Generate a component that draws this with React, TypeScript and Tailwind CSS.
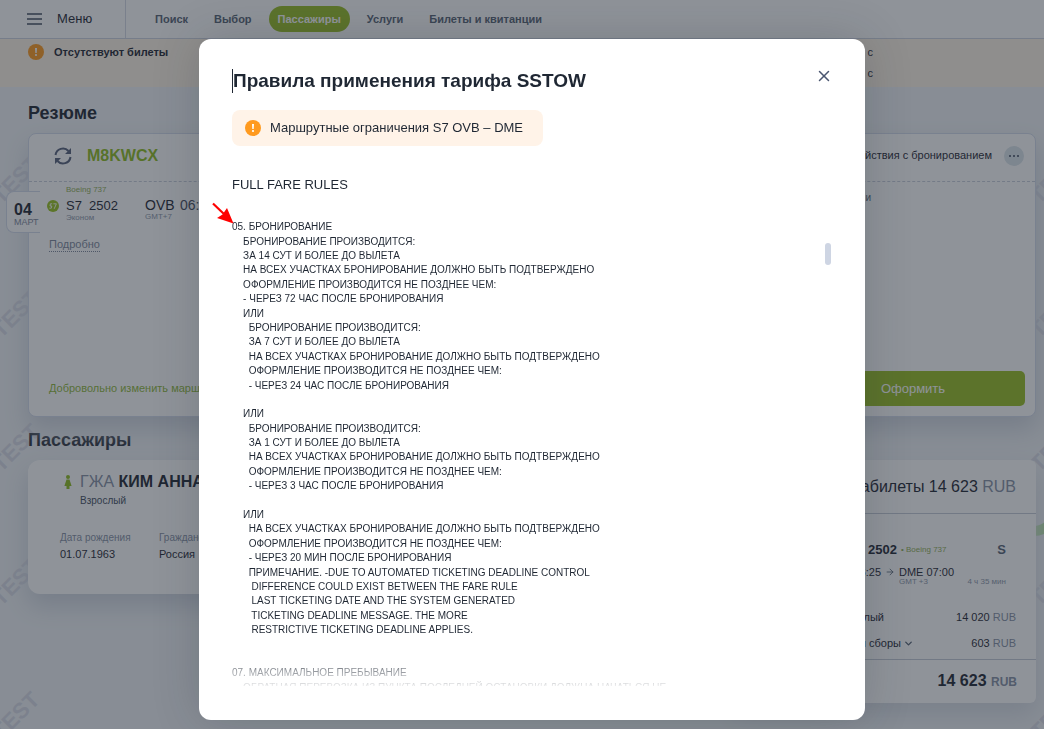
import { X, ChevronDown, ArrowRight } from 'lucide-react'
import clsx from 'clsx'

const navItems = [
  { label: 'Поиск',              active: false },
  { label: 'Выбор',              active: false },
  { label: 'Пассажиры',          active: true  },
  { label: 'Услуги',             active: false },
  { label: 'Билеты и квитанции', active: false },
]

// Leading spaces are part of the fare text, as it comes from the airline
const fareLines = [
  '05. БРОНИРОВАНИЕ',
  '    БРОНИРОВАНИЕ ПРОИЗВОДИТСЯ:',
  '    ЗА 14 СУТ И БОЛЕЕ ДО ВЫЛЕТА',
  '    НА ВСЕХ УЧАСТКАХ БРОНИРОВАНИЕ ДОЛЖНО БЫТЬ ПОДТВЕРЖДЕНО',
  '    ОФОРМЛЕНИЕ ПРОИЗВОДИТСЯ НЕ ПОЗДНЕЕ ЧЕМ:',
  '    - ЧЕРЕЗ 72 ЧАС ПОСЛЕ БРОНИРОВАНИЯ',
  '    ИЛИ',
  '      БРОНИРОВАНИЕ ПРОИЗВОДИТСЯ:',
  '      ЗА 7 СУТ И БОЛЕЕ ДО ВЫЛЕТА',
  '      НА ВСЕХ УЧАСТКАХ БРОНИРОВАНИЕ ДОЛЖНО БЫТЬ ПОДТВЕРЖДЕНО',
  '      ОФОРМЛЕНИЕ ПРОИЗВОДИТСЯ НЕ ПОЗДНЕЕ ЧЕМ:',
  '      - ЧЕРЕЗ 24 ЧАС ПОСЛЕ БРОНИРОВАНИЯ',
  '',
  '    ИЛИ',
  '      БРОНИРОВАНИЕ ПРОИЗВОДИТСЯ:',
  '      ЗА 1 СУТ И БОЛЕЕ ДО ВЫЛЕТА',
  '      НА ВСЕХ УЧАСТКАХ БРОНИРОВАНИЕ ДОЛЖНО БЫТЬ ПОДТВЕРЖДЕНО',
  '      ОФОРМЛЕНИЕ ПРОИЗВОДИТСЯ НЕ ПОЗДНЕЕ ЧЕМ:',
  '      - ЧЕРЕЗ 3 ЧАС ПОСЛЕ БРОНИРОВАНИЯ',
  '',
  '    ИЛИ',
  '      НА ВСЕХ УЧАСТКАХ БРОНИРОВАНИЕ ДОЛЖНО БЫТЬ ПОДТВЕРЖДЕНО',
  '      ОФОРМЛЕНИЕ ПРОИЗВОДИТСЯ НЕ ПОЗДНЕЕ ЧЕМ:',
  '      - ЧЕРЕЗ 20 МИН ПОСЛЕ БРОНИРОВАНИЯ',
  '      ПРИМЕЧАНИЕ. -DUE TO AUTOMATED TICKETING DEADLINE CONTROL',
  '       DIFFERENCE COULD EXIST BETWEEN THE FARE RULE',
  '       LAST TICKETING DATE AND THE SYSTEM GENERATED',
  '       TICKETING DEADLINE MESSAGE. THE MORE',
  '       RESTRICTIVE TICKETING DEADLINE APPLIES.',
  '',
  '',
  '07. МАКСИМАЛЬНОЕ ПРЕБЫВАНИЕ',
  '    ОБРАТНАЯ ПЕРЕВОЗКА ИЗ ПУНКТА ПОСЛЕДНЕЙ ОСТАНОВКИ ДОЛЖНА НАЧАТЬСЯ НЕ',
]

function WarningIcon() {
  return (
    <svg viewBox="0 0 16 16" className="size-4 shrink-0" aria-hidden="true">
      <circle cx="8" cy="8" r="8" fill="#ff9a1f" />
      <path d="M7 4h2l-.3 5H7.3z" fill="#fff" />
      <circle cx="8" cy="11" r="1.1" fill="#fff" />
    </svg>
  )
}

function SyncIcon() {
  return (
    <svg viewBox="0 0 18 18" className="size-[18px]" aria-hidden="true">
      <path d="M1.5 8A7.5 7.5 0 0 1 14.5 4M16.5 10A7.5 7.5 0 0 1 3.5 14" stroke="#56607a" strokeWidth="2" fill="none" />
      <path d="M17 1v6h-6zM1 17v-6h6z" fill="#56607a" />
    </svg>
  )
}

function Watermarks({ className }: { className: string }) {
  return (
    <div aria-hidden="true" className={clsx('absolute top-[163px] flex flex-col gap-[100px]', className)}>
      {[0, 1, 2, 3, 4].map(i => (
        <span key={i} className="-rotate-45 text-[22px] leading-[34px] font-bold text-[#d9dbe6]">TEST</span>
      ))}
    </div>
  )
}

function Header() {
  return (
    <header className="flex h-[39px] items-center border-b border-[#cdd3e0] bg-white">
      <button className="flex h-full w-[126px] items-center gap-[15px] border-r border-[#d5d9e4] pl-[27px] text-[13px]">
        <svg viewBox="0 0 15 12" className="h-3 w-[15px]" stroke="#434e60" strokeWidth="1.4" aria-hidden="true">
          <path d="M0 1h15M0 6h15M0 11h15" />
        </svg>
        Меню
      </button>
      <nav className="ml-5 flex items-center gap-2 text-[11px] font-bold">
        {navItems.map(item => (
          <a
            key={item.label}
            href="#"
            className={clsx(
              'flex h-[26px] items-center rounded-full px-[9px]',
              item.active ? 'bg-[#99bf23] text-white' : 'text-[#566374]'
            )}
          >
            {item.label}
          </a>
        ))}
      </nav>
    </header>
  )
}

function Notice() {
  return (
    <div className="flex h-12 justify-between bg-[#fff5e6] pt-[5px] pr-[171px] pl-7 text-[11px]">
      <div className="flex h-4 items-center gap-[10px] font-bold">
        <WarningIcon />
        Отсутствуют билеты
      </div>
      <div className="-mt-[2px] leading-[21px]">
        <p>с</p>
        <p>с</p>
      </div>
    </div>
  )
}

function Booking() {
  return (
    <section className="relative h-[284px] rounded-lg border border-[#d3daea] bg-white shadow-[0_12px_24px_#cdd3dd]">
      <div className="flex h-12 items-center border-b border-dashed border-[#c8cedb] pr-[11px] pb-1 pl-[25px]">
        <SyncIcon />
        <span className="ml-[15px] text-base font-bold text-[#8fbc1f]">M8KWCX</span>
        <span className="mr-3 ml-auto text-[11px]">Действия с бронированием</span>
        <button aria-label="Ещё" className="flex size-5 items-center justify-center gap-[2px] rounded-full bg-[#dbe4ea]">
          <i className="size-[2px] rounded-full bg-[#3d475c]" />
          <i className="size-[2px] rounded-full bg-[#3d475c]" />
          <i className="size-[2px] rounded-full bg-[#3d475c]" />
        </button>
      </div>

      {/* Date tab sticks out of the card */}
      <div className="absolute top-[57px] -left-[23px] h-[42px] w-[34px] rounded-l-lg border border-r-0 border-[#d3daea] bg-white pt-[10px] pl-[7px]">
        <div className="text-base leading-4 font-bold">04</div>
        <div className="text-[9px] leading-2 text-[#7d879b]">МАРТ</div>
      </div>

      <div className="flex items-start pt-1 pl-[18px]">
        <svg viewBox="0 0 12 12" className="mt-[14px] size-3" aria-hidden="true">
          <circle cx="6" cy="6" r="6" fill="#99c31f" />
          <path d="M5.2 3.8H3.4L3 6h1.8l-.5 2.2H2.4M6.4 3.8h3L7.2 8.8" stroke="#fff" strokeWidth="0.9" fill="none" />
        </svg>
        <div className="ml-[7px] w-[79px] text-[8px] leading-[8px] text-[#8d97aa]">
          <div className="text-[#90ae55]">Boeing 737</div>
          <div className="text-[13px] leading-6 whitespace-pre text-[#1f2733]">S7  2502</div>
          <div className="-mt-1">Эконом</div>
        </div>
        <div className="w-[35px] pt-[7px] text-[8px] leading-[8px] text-[#8d97aa]">
          <div className="text-[14px] leading-6 text-[#1f2733]">OVB</div>
          <div className="-mt-1">GMT+7</div>
        </div>
        <div className="pt-[7px] text-[14px] leading-6 text-[#434b5b]">06:25</div>
        <div className="mt-1 mr-[164px] ml-auto text-[10px] text-[#566374]">и</div>
      </div>
      <a href="#" className="mt-4 ml-5 inline-block border-b border-dotted border-[#7d879b] text-[11px] leading-[13px] text-[#7d879b]">Подробно</a>

      <div className="absolute right-[10px] bottom-[10px] left-5 flex items-center justify-between">
        <a href="#" className="text-[11px] text-[#8fb83a]">Добровольно изменить маршрут</a>
        <button className="h-[35px] w-[224px] rounded-[5px] bg-[#99bf23] text-[13px] text-white">Оформить</button>
      </div>
    </section>
  )
}

function Passenger() {
  return (
    <article className="h-[134px] flex-1 rounded-xl bg-white px-8 pt-[11px] shadow-[0_12px_24px_#cdd3dd]">
      <div className="flex items-center gap-2">
        <svg viewBox="0 0 8 14" className="ml-1 h-[14px] w-2" fill="#8fbc1f" aria-hidden="true">
          <circle cx="4" cy="2" r="2" />
          <path d="M2.5 4.6h3L7.6 11H5.5v3h-3v-3H.4z" />
        </svg>
        <h3 className="text-base leading-[22px] font-bold whitespace-nowrap">
          <span className="font-normal text-[#8690a4]">ГЖА</span> КИМ АННА
        </h3>
      </div>
      <p className="pt-px pl-5 text-[10px] leading-[14px] text-[#434e60]">Взрослый</p>
      <dl className="mt-[22px] flex text-[11px] leading-4">
        <div className="w-[99px]">
          <dt className="text-[10px] text-[#8690a4]">Дата рождения</dt>
          <dd>01.07.1963</dd>
        </div>
        <div>
          <dt className="text-[10px] text-[#8690a4]">Гражданство</dt>
          <dd>Россия</dd>
        </div>
      </dl>
    </article>
  )
}

function Rub() {
  return <span className="text-[#8690a4]">RUB</span>
}

function Price() {
  return (
    <aside className="h-[243px] w-[300px] rounded-md bg-white shadow-[0_12px_24px_#d5dae2]">
      <h3 className="h-[54px] border-b border-[#c5cbd6] pr-5 text-right text-base leading-[53px]">
        Авиабилеты 14 623 <Rub />
      </h3>
      <div className="h-[146px] border-b border-[#c5cbd6] pt-[27px] pr-5 pl-16 text-[11px]">
        <div className="flex items-center">
          <b className="w-[97px] text-right text-[13px] leading-[18px]">S7 2502</b>
          <span className="ml-1 text-[8px] text-[#90ae55]">• Boeing 737</span>
          <b className="mr-[10px] ml-auto text-[13px] leading-[18px] text-[#566374]">S</b>
        </div>
        <div className="mt-[5px] flex items-center leading-4 whitespace-nowrap">
          <span className="w-[81px] text-right">06:25</span>
          <ArrowRight size={10} className="mx-1" color="#566374" />
          <span>DME 07:00</span>
        </div>
        <div className="-mt-1 flex justify-between pr-[10px] pl-[99px] text-[8px] leading-[12px] text-[#8d97aa]">
          <span>GMT +3</span>
          <span>4 ч 35 мин</span>
        </div>
        <div className="mt-4 flex justify-between leading-[26px]">
          <span className="w-[84px] text-right">Взрослый</span>
          <span>14 020 <Rub /></span>
        </div>
        <div className="flex justify-between leading-[26px]">
          <span className="flex items-center gap-[2px] whitespace-nowrap">
            <span className="w-[101px] text-right">Таксы и сборы</span>
            <ChevronDown size={11} strokeWidth={3} color="#566374" />
          </span>
          <span>603 <Rub /></span>
        </div>
      </div>
      <div className="pr-[19px] text-right text-base leading-[42px] font-bold">
        14 623 <span className="text-xs"><Rub /></span>
      </div>
    </aside>
  )
}

function FareRules() {
  return (
    <div className="fixed inset-0 z-20 flex items-start justify-center bg-[#1f2733]/50 pt-[39px] pl-5">
      <div
        role="dialog"
        aria-labelledby="rules-title"
        className="relative h-[681px] w-full max-w-[666px] rounded-xl bg-white px-[33px] pt-[30px] shadow-[0_0_48px_#1f273333]"
      >
        <div className="flex items-start justify-between">
          <h1 id="rules-title" className="border-l border-[#1f2733] text-[19px] leading-6 font-bold">
            Правила применения тарифа SSTOW
          </h1>
          <button aria-label="Закрыть" className="-mt-[2px] -mr-px">
            <X size={18} color="#4a5670" />
          </button>
        </div>
        <div className="mt-[17px] inline-flex h-9 items-center gap-[9px] rounded-lg bg-[#fff3e8] pr-5 pl-[13px] text-[13px]">
          <WarningIcon />
          Маршрутные ограничения S7 OVB – DME
        </div>

        <div className="relative mt-[31px] h-[509px] overflow-hidden">
          <h2 className="text-[13px] leading-4 font-medium">FULL FARE RULES</h2>
          <div className="mt-[27px] grid h-[475px] auto-rows-fr items-center text-[10px] leading-3">
            {fareLines.map((line, i) => (
              <div key={i} className="whitespace-pre">{line}</div>
            ))}
          </div>
          <div className="absolute inset-x-0 bottom-0 h-6 bg-linear-to-b from-white/30 to-white/90" />
          <div className="absolute top-[66px] right-px h-[22px] w-[6px] rounded-full bg-[#ced5e3]" />
        </div>

        <svg viewBox="0 0 22 22" className="absolute top-[163px] left-[13px] size-[22px]" aria-hidden="true">
          <path d="M1 1.5L13 13" stroke="#f00" strokeWidth="2.2" />
          <path d="M21.5 21.5L5 16 10.5 12.5 15 6z" fill="#f00" />
        </svg>
      </div>
    </div>
  )
}

export default function App() {
  return (
    <div className="relative min-h-screen overflow-hidden bg-[#f0f3f6] font-['Liberation_Sans',Arial,sans-serif] text-[#1f2733]">
      <Header />
      <Notice />
      <Watermarks className="-left-3" />
      <Watermarks className="-right-[38px]" />
      <svg viewBox="0 0 52 52" className="absolute top-[484px] -right-4 size-[52px]" aria-hidden="true">
        <path d="M5 26a21 21 0 0 0 42 0" fill="none" stroke="#b0e39b" strokeWidth="10" />
      </svg>
      <main className="relative pr-2 pl-7">
        <h2 className="pt-[13px] pb-[7px] text-lg leading-[26px] font-bold">Резюме</h2>
        <Booking />
        <h2 className="pt-[10px] pb-[7px] text-lg leading-[26px] font-bold">Пассажиры</h2>
        <div className="flex items-start gap-5">
          <Passenger />
          <Price />
        </div>
      </main>
      <FareRules />
    </div>
  )
}
